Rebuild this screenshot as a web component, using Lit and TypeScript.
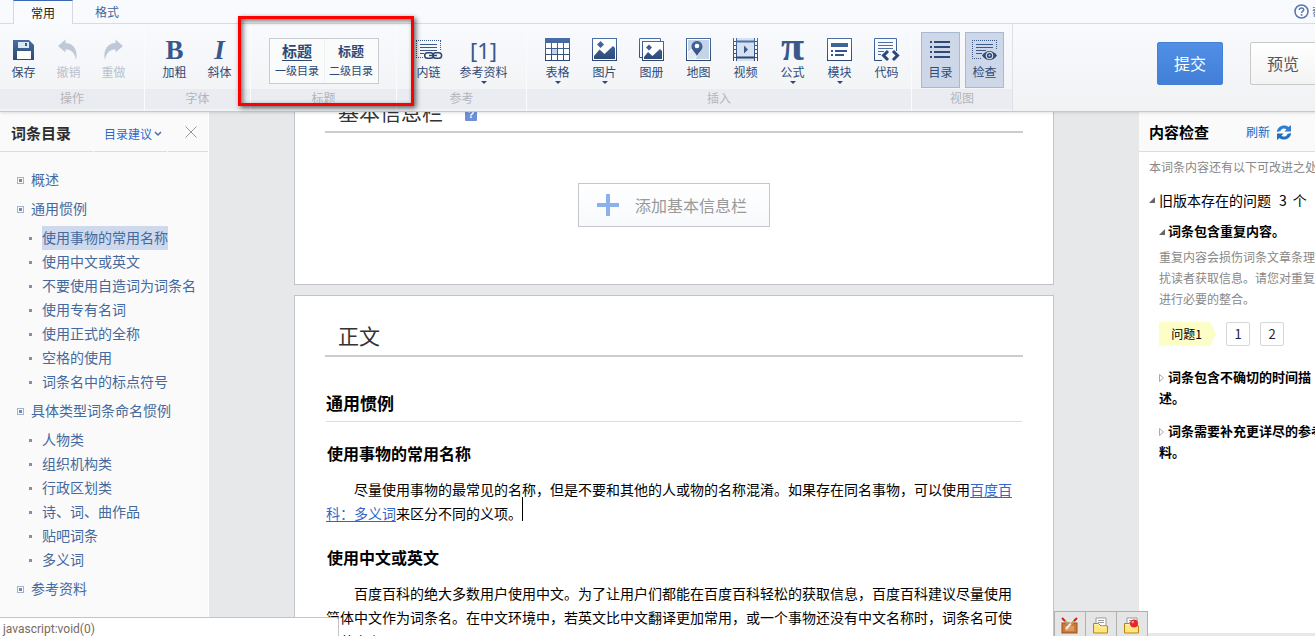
import { LitElement, html, css, svg, nothing } from "lit";
import { customElement, property, state } from "lit/decorators.js";
import { classMap } from "lit/directives/class-map.js";

const INK = "#3a5a8c";

const pixelGradient = svg`
  <defs>
    <linearGradient id="ink" x1="0" y1="0" x2="0" y2="23" gradientUnits="userSpaceOnUse">
      <stop offset="0" stop-color="#4a70a8"></stop>
      <stop offset="1" stop-color="#2d4773"></stop>
    </linearGradient>
  </defs>`;

const icons: Record<string, unknown> = {
  save: svg`
    <path d="M2 2H18L23 7V22H2Z" fill="url(#ink)"></path>
    <rect x="7" y="4" width="11" height="6" fill="#dde7f4"></rect>
    <rect x="14" y="5" width="2" height="3" fill="#3a5a8c"></rect>
    <rect x="6" y="13" width="14" height="8" fill="#fff"></rect>`,
  undo: svg`<path d="M2 8L9.500 1.500V5C17 5 22.500 12 20 22C18.500 14 15 11.500 9.500 11.500V14.500Z" fill="#bfc8d6"></path>`,
  redo: svg`<path d="M22 8L14.500 1.500V5C7 5 1.500 12 4 22C5.500 14 9 11.500 14.500 11.500V14.500Z" fill="#bfc8d6"></path>`,
  link: svg`
    <path d="M0 2.500H25M0 19.500H7" stroke="${INK}" stroke-dasharray="1 1" fill="none"></path>
    <path d="M.5 3V20M24.500 3V13" stroke="${INK}" stroke-dasharray="1 1"></path>
    <path d="M4 6.500H21M4 9.500H21M4 12.500H21M4 15.500H8" stroke="${INK}"></path>
    <rect x="8.700" y="14.700" width="8.600" height="5.600" rx="2.800" fill="#f8f9fb" stroke="#2d4773" stroke-width="1.500"></rect>
    <rect x="17" y="14.700" width="8.600" height="5.600" rx="2.800" fill="#f8f9fb" stroke="#2d4773" stroke-width="1.500"></rect>
    <path d="M13 17.500H21" stroke="#2d4773" stroke-width="1.500"></path>`,
  table: svg`
    <rect x=".5" y=".5" width="24" height="22" fill="#fff" stroke="url(#ink)"></rect>
    <rect x="0" y="0" width="25" height="5" fill="url(#ink)"></rect>
    <rect x="7" y="11" width="5" height="5" fill="#c3d3e8"></rect>
    <path d="M6.500 5V22M12.500 5V22M18.500 5V22M1 10.500H24M1 16.500H24" stroke="url(#ink)" fill="none"></path>`,
  picture: svg`
    <rect x=".5" y=".5" width="24" height="22" fill="#fff" stroke="url(#ink)"></rect>
    <path d="M8.500 3L12 6.500L8.500 10L5 6.500Z" fill="url(#ink)"></path>
    <path d="M2 21V18L7.500 11.500L12.500 16L21 8L23 10V21Z" fill="url(#ink)"></path>`,
  album: svg`
    <path d="M3 19.500H.5V.5H21.500V3" fill="none" stroke="url(#ink)"></path>
    <rect x="3.500" y="3.500" width="21" height="19" fill="#fff" stroke="url(#ink)"></rect>
    <path d="M10 6.500L13 9.500L10 12.500L7 9.500Z" fill="url(#ink)"></path>
    <path d="M5 21V19L9 14L13.500 18L21 11L23 13V21Z" fill="url(#ink)"></path>`,
  map: svg`
    <rect x=".5" y=".5" width="24" height="22" fill="#fff" stroke="url(#ink)"></rect>
    <path d="M2 2H23V21H9L14 14L8 9L2 14Z" fill="#c6d4e8"></path>
    <path d="M2 21V15L8 11L12 16L8 21Z" fill="#dfe8f3"></path>
    <path d="M11 3C14.500 3 16.500 5.500 16.500 8.500C16.500 12 13 14 11 18C9 14 5.500 12 5.500 8.500C5.500 5.500 7.500 3 11 3Z" fill="url(#ink)"></path>
    <circle cx="11" cy="8" r="2.300" fill="#fff"></circle>`,
  video: svg`
    <rect x="4" y="0" width="17" height="23" fill="#d6e1f0"></rect>
    <path d="M4 3.500H21" stroke="#4a70a8" stroke-width="2"></path>
    <path d="M4 19.500H21" stroke="#2d4773" stroke-width="2"></path>
    <path d="M.5 0V23M3.500 0V23M21.500 0V23M24.500 0V23" stroke="url(#ink)"></path>
    <path d="M2 3V23M23 3V23" stroke="#3a5a8c" stroke-width="2" stroke-dasharray="1 3"></path>
    <path d="M11 7.500V15.500L15 11.500Z" fill="url(#ink)"></path>`,
  module: svg`
    <rect x=".5" y=".5" width="24" height="22" fill="#fff" stroke="url(#ink)"></rect>
    <rect x="4" y="5" width="17" height="4" fill="url(#ink)"></rect>
    <path d="M4 13H6M8 13H20M4 17H6M8 17H17" stroke="#36558a" stroke-width="2"></path>`,
  code: svg`
    <path d="M22.500 13V.5H.5V22.500H8" fill="none" stroke="url(#ink)"></path>
    <path d="M4 4.500H19M4 7.500H19M4 10.500H19M4 13.500H10M4 16.500H7" stroke="#4a70a8"></path>
    <path d="M14 13L9.500 17.500L14 22M19 13L23.500 17.500L19 22" fill="none" stroke="#2d4773" stroke-width="3"></path>`,
  list: svg`
    <path d="M2 4H4M6 4H22M2 9H4M6 9H22M2 14H4M6 14H22M2 19H4M6 19H22" stroke="#2f4a76" stroke-width="2"></path>`,
  check: svg`
    <path d="M0 2.500H25M0 20.500H10" stroke="${INK}" stroke-dasharray="1 1" fill="none"></path>
    <path d="M.5 4V20M24.500 4V11" stroke="${INK}" stroke-dasharray="1 1" fill="none"></path>
    <path d="M4 6.500H21M4 9.500H21M4 12.500H14M4 15.500H10" stroke="${INK}"></path>
    <path d="M10 17.500C14 11.500 21 11.500 25 17.500C21 23.500 14 23.500 10 17.500Z" fill="#2f4a76"></path>
    <circle cx="17.500" cy="17.500" r="3.200" fill="#2f4a76" stroke="#cdd7e7" stroke-width="1.200"></circle>
    <circle cx="17.500" cy="17.500" r="1" fill="#cdd7e7"></circle>`,
};

interface Tool {
  label: string;
  icon?: string;
  glyph?: string;
  glyphClass?: string;
  caret?: boolean;
  disabled?: boolean;
  toggled?: boolean;
}

@customElement("tool-button")
class ToolButton extends LitElement {
  @property({ attribute: false }) tool!: Tool;

  static styles = css`
    :host { display: block; }
    .tool {
      display: flex;
      flex-direction: column;
      align-items: center;
      box-sizing: border-box;
      width: 100%;
      height: 56px;
      padding: 5px 0 0;
      border: 1px solid transparent;
      background: none;
      color: #2f4a76;
      font: 12px/16px "Noto Sans CJK SC", sans-serif;
      cursor: pointer;
      white-space: nowrap;
    }
    .tool.dim { color: #b9c2d0; }
    .tool.on { border-color: #a9b9d3; background: #cdd7e7; }
    .art {
      display: flex;
      align-items: center;
      justify-content: center;
      flex: none;
      width: 27px;
      height: 23px;
      margin-bottom: 3px;
    }
    .art svg { flex: none; overflow: visible; }
    .glyph { color: #38588b; }
    .serif { font: bold 27px/24px "Liberation Serif", serif; }
    .slant { font: italic bold 27px/24px "Liberation Serif", serif; }
    .number { font: 22px/20px "Noto Sans", sans-serif; }
    .pi { font: bold 42px/20px "Liberation Serif", serif; margin-bottom: 8px; }
    .caret {
      border: 3px solid transparent;
      border-top-color: #2f4a76;
      border-bottom: 0;
      margin-top: 1px;
    }
  `;

  render() {
    const t = this.tool;
    return html`
      <button class=${classMap({ tool: true, dim: !!t.disabled, on: !!t.toggled })} ?disabled=${t.disabled}>
        <span class="art">
          ${t.icon
            ? html`<svg width="25" height="23" viewBox="0 0 25 23" aria-hidden="true">${pixelGradient}${icons[t.icon]}</svg>`
            : html`<span class="glyph ${t.glyphClass ?? ""}">${t.glyph}</span>`}
        </span>
        <span>${t.label}</span>
        ${t.caret ? html`<span class="caret"></span>` : nothing}
      </button>
    `;
  }
}

interface OutlineNode {
  label: string;
  children?: string[];
}

const outline: OutlineNode[] = [
  { label: "概述" },
  {
    label: "通用惯例",
    children: ["使用事物的常用名称", "使用中文或英文", "不要使用自造词为词条名", "使用专有名词", "使用正式的全称", "空格的使用", "词条名中的标点符号"],
  },
  {
    label: "具体类型词条命名惯例",
    children: ["人物类", "组织机构类", "行政区划类", "诗、词、曲作品", "贴吧词条", "多义词"],
  },
  { label: "参考资料" },
];

@customElement("outline-panel")
class OutlinePanel extends LitElement {
  @state() private current = "使用事物的常用名称";

  static styles = css`
    :host {
      display: block;
      box-sizing: border-box;
      background: #fafafa;
      border-right: 1px solid #fff;
      font: 14px/24px "Noto Sans CJK SC", sans-serif;
    }
    .head { display: flex; gap: 1px; height: 40px; }
    .cell {
      display: flex;
      align-items: center;
      box-sizing: border-box;
      border-bottom: 1px solid #ddd;
      padding-top: 4px;
    }
    .name { width: 93px; padding-left: 11px; padding-top: 2px; }
    .advice { width: 73px; justify-content: flex-end; }
    .end { flex: 1; justify-content: center; padding: 0 0 0 5px; }
    h2 { margin: 0; font-size: 15px; line-height: 20px; color: #2d2d2d; }
    button { border: 0; padding: 0; background: none; font-family: inherit; cursor: pointer; }
    .menu { display: flex; align-items: center; gap: 2px; margin-right: 5px; font-size: 12px; line-height: 20px; color: #3165ce; white-space: nowrap; }
    .close { display: flex; }
    ul { list-style: none; margin: 0; padding: 0; }
    .tree { display: flex; flex-direction: column; gap: 5px; padding: 16px 0 0 17px; }
    .branch { margin-top: 5px; padding-left: 12px; }
    .row { display: flex; align-items: center; height: 24px; }
    .box { box-sizing: border-box; width: 7px; height: 7px; margin-right: 7px; border: 1px solid #a3b4ca; background: #6f8db3; box-shadow: inset 0 0 0 1px #fafafa; }
    .dot { width: 3px; height: 3px; margin-right: 10px; background: #7b92b3; }
    a { height: 24px; line-height: 22px; color: #44699e; text-decoration: none; white-space: nowrap; }
    .picked { background: #ced9ed; }
  `;

  private leaf(label: string) {
    return html`<li class="row">
      <span class="dot"></span>
      <a href="#" class=${classMap({ picked: this.current === label })} @click=${() => (this.current = label)}>${label}</a>
    </li>`;
  }

  render() {
    return html`
      <div class="head">
        <div class="cell name"><h2>词条目录</h2></div>
        <div class="cell advice">
          <button class="menu">目录建议<svg width="8" height="6" viewBox="0 0 8 6" aria-hidden="true"><path d="M1 1L4 4L7 1" fill="none" stroke="#4a6da3" stroke-width="1.500"></path></svg></button>
        </div>
        <div class="cell end">
          <button class="close" aria-label="关闭"><svg width="12" height="12" viewBox="0 0 12 12"><path d="M.5 .5L11.500 11.500M11.500 .5L.5 11.500" stroke="#999"></path></svg></button>
        </div>
      </div>
      <ul class="tree">
        ${outline.map(
          (n) => html`<li>
            <div class="row"><span class="box"></span><a href="#">${n.label}</a></div>
            ${n.children ? html`<ul class="branch">${n.children.map((c) => this.leaf(c))}</ul>` : nothing}
          </li>`
        )}
      </ul>
    `;
  }
}

@customElement("review-panel")
class ReviewPanel extends LitElement {
  static styles = css`
    :host { display: block; background: #fff; font: 12px/21px "Noto Sans CJK SC", sans-serif; color: #000; }
    .head {
      display: flex;
      align-items: center;
      height: 39px;
      box-sizing: border-box;
      padding: 1px 0 0 10px;
      background: #fafafa;
    }
    .rule { height: 1px; background: #ddd; }
    h2 { margin: 0 37px 0 0; font-size: 15px; line-height: 20px; }
    button { font-family: inherit; cursor: pointer; }
    .refresh { display: flex; align-items: center; gap: 6px; padding: 0; border: 0; background: none; font-size: 12px; line-height: 20px; color: #0f6cc7; }
    .body { padding: 4px 0 0 10px; }
    p { margin: 0; color: #888; }
    .total { display: flex; align-items: center; gap: 2px; margin: 13px 0 0; font-size: 14px; font-weight: normal; line-height: 21px; }
    .total .mark { margin-right: 2px; }
    .total b { padding: 0 6px 0 8px; font-weight: normal; }
    .issue { padding: 0 16px 0 10px; }
    h4 { margin: 12px 0 0; font-size: 13px; line-height: 21px; }
    h4.open { margin-top: 9px; }
    .mark { margin-right: 3px; }
    .detail { margin-top: 5px; }
    .marks { display: flex; gap: 10px; margin: 13px 0 20px; }
    .tag {
      width: 57px;
      height: 24px;
      box-sizing: border-box;
      padding: 1px 2px 0 0;
      background: #fdfdc8;
      clip-path: polygon(0 0, 51px 0, 57px 12px, 51px 24px, 0 24px);
      text-align: center;
    }
    .jump {
      width: 24px;
      height: 24px;
      padding: 0;
      border: 1px solid #d5d8da;
      border-radius: 2px;
      background: #fff;
      color: #22204a;
      font-size: 13px;
      line-height: 20px;
    }
  `;

  private opened = html`<svg class="mark" width="6" height="7" viewBox="0 0 6 7" aria-hidden="true"><path d="M6 0V6H0Z" fill="#666"></path></svg>`;
  private closed = html`<svg class="mark" width="6" height="8" viewBox="0 0 6 8" aria-hidden="true"><path d="M.5 .5V7.500L4.500 4Z" fill="#fff" stroke="#aaa"></path></svg>`;

  render() {
    return html`
      <div class="head">
        <h2>内容检查</h2>
        <button class="refresh">刷新
          <svg width="16" height="15" viewBox="0 0 16 15" aria-hidden="true">
            <path d="M1 7C1 1.500 8-1.500 12.500 2L15 0V6.500H8.500L10.500 4.300C8 2.500 5 3.500 4.500 6Z" fill="#2e7fd0"></path>
            <path d="M15 8C15 13.500 8 16.500 3.500 13L1 15V8.500H7.500L5.500 10.700C8 12.500 11 11.500 11.500 9Z" fill="#1f70c4"></path>
          </svg>
        </button>
      </div>
      <div class="rule"></div>
      <div class="body">
        <p>本词条内容还有以下可改进之处：</p>
        <h3 class="total">${this.opened}<span>旧版本存在的问题<b>3</b>个</span></h3>
        <div class="issue">
          <h4 class="open">${this.opened}词条包含重复内容。</h4>
          <p class="detail">重复内容会损伤词条文章条理，干扰读者获取信息。请您对重复内容进行必要的整合。</p>
          <div class="marks">
            <span class="tag">问题1</span>
            <button class="jump">1</button>
            <button class="jump">2</button>
          </div>
          <h4>${this.closed}词条包含不确切的时间描<br />述。</h4>
          <h4>${this.closed}词条需要补充更详尽的参考资<br />料。</h4>
        </div>
      </div>
    `;
  }
}

@customElement("app-root")
class AppRoot extends LitElement {
  static styles = css`
    :host {
      display: block;
      position: relative;
      height: 100vh;
      overflow: hidden;
      font: 14px/24px "Noto Sans CJK SC", sans-serif;
      color: #000;
    }
    .frame { display: flex; flex-direction: column; height: 100%; min-width: 1355px; background: #e7e8ea; }
    button { font-family: inherit; cursor: pointer; }
    header { flex: none; position: relative; background: linear-gradient(#f9fafd 24px, #f1f2f4); border-bottom: 1px solid #c8c9cc; box-shadow: 0 1px 3px rgba(0, 0, 0, 0.12); }

    .tabs { display: flex; align-items: flex-start; gap: 5px; height: 24px; box-sizing: border-box; padding: 0 19px 0 13px; box-shadow: inset 0 -1px #d9dbe0; }
    .tab { box-sizing: border-box; height: 24px; padding: 0 17px; border: 0; background: none; color: #44669c; font-size: 12px; line-height: 22px; }
    .tab.active { border: 1px solid #d5d8de; border-top-color: #3a67b5; border-bottom: 0; background: #fafbfd; color: #222; }
    .help { display: flex; align-items: center; gap: 3px; height: 23px; margin-left: auto; color: #5878b0; font-size: 12px; line-height: 22px; text-decoration: none; }

    .ribbon { display: flex; }
    .group { display: flex; flex-direction: column; border-right: 1px solid #fafbfd; padding-bottom: 2px; }
    .group.view { border-right-color: #dfe1e6; }
    .tools { display: flex; height: 65px; box-sizing: border-box; padding-top: 8px; }
    .tools tool-button { width: 45px; }
    .caption { height: 20px; background: #ebecf1; color: #b2b5bc; font-size: 12px; line-height: 18px; text-align: center; }
    .ops .tools { padding-left: 1px; padding-right: 8px; }
    .font .tools { padding-left: 7px; padding-right: 8px; }
    .titles .tools { padding: 14px 17px 0 18px; }
    .refs .tools { padding-left: 9px; padding-right: 10px; }
    .refs tool-button.wide { width: 65px; }
    .insert .tools { gap: 2px; padding-left: 8px; padding-right: 2px; }
    .view .tools { gap: 5px; padding-left: 9px; padding-right: 8px; }
    .view tool-button { width: 39px; }
    .pair { display: flex; height: 46px; box-sizing: border-box; border: 1px solid #c9cdd2; background: #fafbfb; }
    .level { display: flex; flex-direction: column; align-items: center; width: 54px; padding: 1px 0 0; border: 0; background: none; color: #2f4a76; font-size: 11px; line-height: 16px; white-space: nowrap; }
    .level + .level { box-shadow: inset 1px 0 #f0f1f3; }
    .level b { height: 22px; font-size: 15px; line-height: 22px; }
    .level .plain { font-size: 13px; }
    .level .lined { text-decoration: underline; text-underline-offset: 3px; text-decoration-thickness: 1px; }
    .actions { display: flex; gap: 27px; margin: 18px 39px 0 auto; }
    .action { height: 43px; padding: 0 16px 2px; border: 1px solid #c9c9c9; border-radius: 2px; background: linear-gradient(#fff, #f3f3f3); color: #555; font-size: 16px; line-height: 24px; }
    .action.main { border-color: #4480d6; background: linear-gradient(#518fe6, #427fd8); color: #fff; }

    .desk { display: flex; flex: 1; min-height: 0; }
    outline-panel { flex: none; width: 209px; }
    review-panel { flex: none; width: 216px; margin-bottom: 3px; }
    main { flex: 1; overflow: hidden; }
    .sheet { width: 760px; box-sizing: border-box; margin: 0 auto 10px; padding: 0 30px; border: 1px solid #c3c4c9; background: #fff; }
    .scrolled { margin-top: -41px; padding-bottom: 57px; }
    h1 { display: flex; align-items: center; gap: 22px; margin: 0; padding: 22px 0 3px 13px; border-bottom: 2px solid #ccc; color: #333; font-size: 21px; font-weight: normal; line-height: 34px; }
    .tip { width: 12px; height: 13px; margin-top: 6px; border-radius: 1px; background: #6f8fd8; color: #fff; font: bold 11px/13px "Liberation Sans", sans-serif; text-align: center; }
    .add { display: flex; align-items: center; gap: 16px; height: 44px; margin: 50px auto 0; padding: 0 22px 0 18px; border: 1px solid #c5c6ca; background: linear-gradient(#fff, #f7f9fc); color: #999; font-size: 16px; line-height: 24px; }
    .text { padding: 34px 1px 60px; }
    .text h2 { margin: 0; padding-bottom: 6px; border-bottom: 1px solid #ddd; font-size: 17px; line-height: 24px; }
    .text h3 { margin: 20px 0 11px; padding: 0 0 2px 1px; font-size: 16px; line-height: 22px; }
    .text p { margin: 0; padding-bottom: 1px; text-indent: 2em; }
    .text a { color: #36c; text-underline-offset: 2px; }
    .cursor { display: inline-block; width: 1px; height: 24px; margin-top: -4px; background: #000; vertical-align: top; }

    .callout { position: absolute; z-index: 3; left: 238px; top: 16px; width: 176px; height: 90px; box-sizing: border-box; border: 3px solid #f00; box-shadow: 2px 2px 5px rgba(0, 0, 0, 0.6), inset 2px 2px 5px rgba(0, 0, 0, 0.55); pointer-events: none; }
    .status { position: absolute; left: 0; bottom: 0; width: 339px; height: 19px; box-sizing: border-box; padding-left: 3px; border: 1px solid #c4c4c4; border-width: 1px 1px 0 0; border-radius: 0 3px 0 0; background: #fff; color: #7a6a60; font: 12px/22px Roboto, sans-serif; }
    .dock { position: absolute; left: 1054px; bottom: 0; display: flex; height: 25px; box-sizing: border-box; border: 1px solid #b0b0b0; border-bottom: 0; }
    .dock button { display: flex; align-items: flex-end; justify-content: center; box-sizing: border-box; width: 30px; padding: 0 1px 2px 0; border: 0; background: #e5e5e6; }
    .dock button + button { width: 31px; border-left: 1px solid #b0b0b0; }
  `;

  private group(cls: string, caption: string, tools: Tool[]) {
    return html`<div class="group ${cls}">
      <div class="tools">
        ${tools.map((t) => html`<tool-button class=${t.label.length > 2 ? "wide" : "std"} .tool=${t}></tool-button>`)}
      </div>
      <div class="caption">${caption}</div>
    </div>`;
  }

  private folder = svg`
    <path d="M4 1H14V9H4Z" fill="#fff" stroke="#999"></path>
    <path d="M6 3.500H12M6 5.500H12" stroke="#999"></path>
    <path d="M1.500 6.500H6.500L9 9H15.500V16H1.500Z" fill="#ffe680" stroke="#b8860b"></path>
    <path d="M2.500 7.500H6L8.500 10H14.500" fill="none" stroke="#fff6c8"></path>`;

  render() {
    return html`
      <div class="frame">
        <header>
          <nav class="tabs">
            <button class="tab active">常用</button>
            <button class="tab">格式</button>
            <a class="help" href="#">
              <svg width="15" height="15" viewBox="0 0 15 15" aria-hidden="true">
                <circle cx="7.500" cy="7.500" r="6.500" fill="#fff" stroke="#5878b0" stroke-width="1.600"></circle>
                <path d="M5.300 6C5.300 3.300 9.700 3.300 9.700 5.800C9.700 7.300 7.500 7.300 7.500 9" fill="none" stroke="#5878b0" stroke-width="1.600"></path>
                <rect x="6.700" y="10" width="1.700" height="1.700" fill="#5878b0"></rect>
              </svg>帮助</a>
          </nav>
          <div class="ribbon">
            ${this.group("ops", "操作", [
              { label: "保存", icon: "save" },
              { label: "撤销", icon: "undo", disabled: true },
              { label: "重做", icon: "redo", disabled: true },
            ])}
            ${this.group("font", "字体", [
              { label: "加粗", glyph: "B", glyphClass: "serif" },
              { label: "斜体", glyph: "I", glyphClass: "slant" },
            ])}
            <div class="group titles">
              <div class="tools">
                <div class="pair">
                  <button class="level"><b class="lined">标题</b>一级目录</button>
                  <button class="level"><b class="plain">标题</b>二级目录</button>
                </div>
              </div>
              <div class="caption">标题</div>
            </div>
            ${this.group("refs", "参考", [
              { label: "内链", icon: "link" },
              { label: "参考资料", glyph: "[1]", glyphClass: "number", caret: true },
            ])}
            ${this.group("insert", "插入", [
              { label: "表格", icon: "table", caret: true },
              { label: "图片", icon: "picture", caret: true },
              { label: "图册", icon: "album" },
              { label: "地图", icon: "map" },
              { label: "视频", icon: "video" },
              { label: "公式", glyph: "π", glyphClass: "pi", caret: true },
              { label: "模块", icon: "module", caret: true },
              { label: "代码", icon: "code" },
            ])}
            ${this.group("view", "视图", [
              { label: "目录", icon: "list", toggled: true },
              { label: "检查", icon: "check", toggled: true },
            ])}
            <div class="actions">
              <button class="action main">提交</button>
              <button class="action">预览</button>
            </div>
          </div>
        </header>

        <div class="desk">
          <outline-panel></outline-panel>
          <main>
            <section class="sheet scrolled">
              <h1>基本信息栏<span class="tip">?</span></h1>
              <button class="add">
                <svg width="22" height="22" viewBox="0 0 22 22" aria-hidden="true"><path d="M11 0V22M0 11H22" stroke="#8ab1ec" stroke-width="4"></path></svg>
                添加基本信息栏
              </button>
            </section>
            <article class="sheet">
              <h1>正文</h1>
              <div class="text">
                <h2>通用惯例</h2>
                <h3>使用事物的常用名称</h3>
                <p>尽量使用事物的最常见的名称，但是不要和其他的人或物的名称混淆。如果存在同名事物，可以使用<a href="#">百度百科：多义词</a>来区分不同的义项。<span class="cursor"></span></p>
                <h3>使用中文或英文</h3>
                <p>百度百科的绝大多数用户使用中文。为了让用户们都能在百度百科轻松的获取信息，百度百科建议尽量使用简体中文作为词条名。在中文环境中，若英文比中文翻译更加常用，或一个事物还没有中文名称时，词条名可使用英文名。</p>
              </div>
            </article>
          </main>
          <review-panel></review-panel>
        </div>
      </div>

      <div class="callout"></div>
      <div class="status">javascript:void(0)</div>
      <div class="dock">
        <button aria-label="工具箱">
          <svg width="17" height="17" viewBox="0 0 17 17">
            <rect x="1" y="6" width="15" height="10" fill="#c97a3c" stroke="#9a5518"></rect>
            <path d="M4 9H13V14H4Z" fill="#dd9a5c"></path>
            <path d="M5 12L12 4" stroke="#eee" stroke-width="2"></path>
            <path d="M4 4L7 7M13 4L10 7" stroke="#c8a040" stroke-width="2"></path>
            <path d="M1 1L4 4M16 1L13 4" stroke="#d8191c" stroke-width="2"></path>
          </svg>
        </button>
        <button aria-label="文件夹"><svg width="17" height="17" viewBox="0 0 17 17">${this.folder}</svg></button>
        <button aria-label="录制">
          <svg width="17" height="17" viewBox="0 0 17 17">${this.folder}<circle cx="11" cy="6.500" r="4" fill="#e8262a"></circle><circle cx="9.800" cy="5" r="1.200" fill="#ff9c8c"></circle></svg>
        </button>
      </div>
    `;
  }
}
